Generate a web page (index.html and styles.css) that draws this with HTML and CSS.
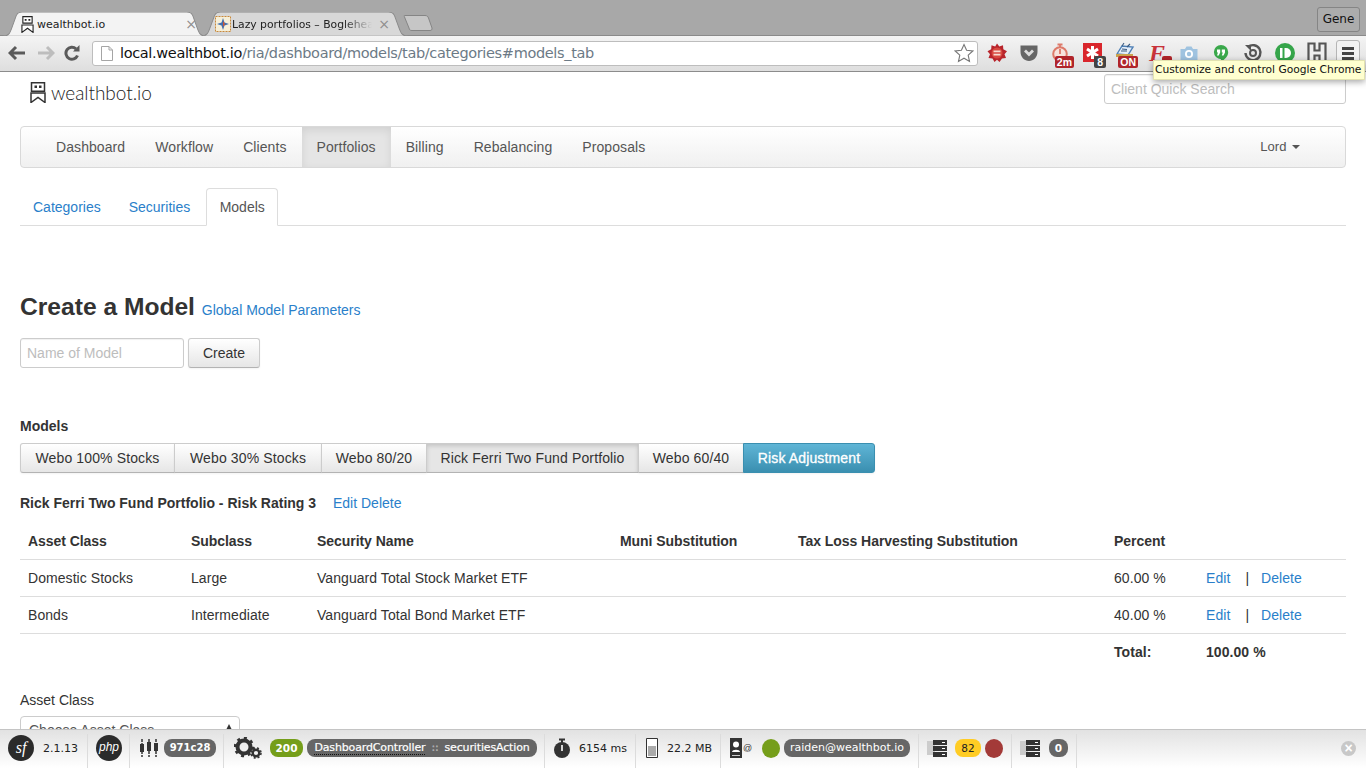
FILE: index.html
```html
<!DOCTYPE html>
<html lang="en">
<head>
    <meta charset="UTF-8">
    <meta name="viewport" content="width=device-width, initial-scale=1.0">
    <title>wealthbot.io</title>
    <link rel="stylesheet" href="styles.css">
</head>
<body>
    <!-- browser frame -->
    <div class="browser">
        <div class="tabstrip">
            <div class="tab tab-active">
                <svg class="tab-shape" viewBox="0 0 200 32" preserveAspectRatio="none"><path d="M0 32C6 32 7 28 9 20L13 5C14 1 16 0 19 0H181C184 0 186 1 187 5L191 20C193 28 194 32 200 32Z" fill="#f3f3f3" stroke="#8a8a8a"/></svg>
                <svg class="tab-icon" viewBox="0 0 14 18" width="13" height="17"><path d="M2 .5H12V7.500H2ZM1 9.500H13V17.500L7 13 1 17.500Z" fill="#fff" stroke="#222" stroke-width="1.200"/><path d="M4 3h2v2H4zM8 3h2v2H8z" fill="#222"/></svg>
                <span class="tab-title">wealthbot.io</span>
                <span class="tab-close">×</span>
            </div>
            <div class="tab tab-back">
                <svg class="tab-shape" viewBox="0 0 200 32" preserveAspectRatio="none"><path d="M0 32C6 32 7 28 9 20L13 5C14 1 16 0 19 0H181C184 0 186 1 187 5L191 20C193 28 194 32 200 32Z" fill="#d8d8d8" stroke="#8a8a8a"/></svg>
                <svg class="tab-icon" viewBox="0 0 16 16" width="16" height="16"><rect x=".5" y=".5" width="15" height="15" fill="#f6efd8" stroke="#c8893a" stroke-dasharray="2 1"/><path d="M8 2 9.500 6.500 14 8 9.500 9.500 8 14 6.500 9.500 2 8 6.500 6.500Z" fill="#3f6fb0"/><path d="M8 5 10 8 8 11Z" fill="#d2562f"/></svg>
                <span class="tab-title tab-fade">Lazy portfolios – Bogleheads</span>
                <span class="tab-close">×</span>
            </div>
            <svg class="newtab" viewBox="0 0 30 16" width="30" height="16"><path d="M1.500.5H22C24 .5 25 1.500 25.500 3L29 13C29.300 14.500 28.500 15.500 27 15.500H9C7 15.500 6.500 15 6 13L1.500 2C1.200 1 1 .5 1.500 .5Z" fill="#c6c6c6" stroke="#858585"/></svg>
            <div class="profile">Gene</div>
        </div>
        <div class="toolbar">
            <svg class="nav-icon nav-back" viewBox="0 0 18 16" width="18" height="16"><path d="M8 2 2 8l6 6M2 8h15" fill="none" stroke="#5a5a5a" stroke-width="3"/></svg>
            <svg class="nav-icon nav-forward" viewBox="0 0 18 16" width="18" height="16"><path d="M10 2l6 6-6 6M16 8H1" fill="none" stroke="#bdbdbd" stroke-width="3"/></svg>
            <svg class="nav-icon nav-reload" viewBox="0 0 16 16" width="16" height="16"><path d="M13.500 10.500A6 6 0 1 1 12 3.800" fill="none" stroke="#5a5a5a" stroke-width="3"/><path d="M9 6.500h6.500V0Z" fill="#5a5a5a"/></svg>
            <div class="omnibox">
                <svg class="page-icon" viewBox="0 0 12 15" width="12" height="15"><path d="M.5.500H8L11.500 4V14.500H.5ZM8 .5V4H11.500" fill="#fff" stroke="#a5a5a5"/></svg>
                <span class="url"><b class="url-host">local.wealthbot.io</b>/ria/dashboard/models/tab/categories#models_tab</span>
                <svg class="star" viewBox="0 0 20 20" width="20" height="20"><path d="M10 1.500 12.600 7.300 18.800 8 14.200 12.200 15.500 18.400 10 15.200 4.500 18.400 5.800 12.200 1.200 8 7.400 7.300Z" fill="#fff" stroke="#777" stroke-width="1.100"/></svg>
            </div>
            <div class="extensions">
                <svg class="ext" viewBox="0 0 22 22" width="22" height="22"><path d="M11 1.500l2.300 3 3.700-1.300.3 4 3.700 2-2.500 3 1.500 3.800-4 .4L13.500 20 11 17.700 8.500 20l-2-3.600-4-.4L4 12.200l-2.500-3 3.700-2 .3-4 3.700 1.300Z" fill="#b8242b"/><circle cx="11" cy="11" r="5.500" fill="#d8483f"/><path d="M7.500 8.500h7v1.800h-7zM7.500 11.800h7v1.800h-7z" fill="#f7dcd2"/></svg>
                <svg class="ext" viewBox="0 0 22 22" width="22" height="22"><path d="M2.500 3.500H19.500V10C19.500 15 15.500 19 11 19S2.500 15 2.500 10Z" fill="#666"/><path d="M7 8.500l4 4 4-4" fill="none" stroke="#ddd" stroke-width="2.800"/></svg>
                <div class="ext ext-badged">
                    <svg viewBox="0 0 22 22" width="22" height="22"><circle cx="10" cy="12" r="6.800" fill="#f7e3dd" stroke="#dd7a6a" stroke-width="2"/><path d="M7.500 2.500h5M10 12V7M10 3v2" stroke="#dd7a6a" stroke-width="1.800"/></svg>
                    <span class="ext-badge badge-red">2m</span>
                </div>
                <div class="ext ext-badged">
                    <svg viewBox="0 0 22 22" width="22" height="22"><rect x="1" y="1" width="19" height="19" fill="#d9262c"/><path d="M10.500 4v13M5 7l11 7M16 7 5 14" stroke="#fff" stroke-width="3"/></svg>
                    <span class="ext-badge badge-dark">8</span>
                </div>
                <div class="ext ext-badged">
                    <svg viewBox="0 0 22 22" width="22" height="22"><path d="M3 12 8 4l11 1-5 8Z" fill="#e4eefa" stroke="#4d7fb5" stroke-width="1.400"/><path d="M8 4 10 1M13 5l3-3M7 9h6M8 7l5 .5" fill="none" stroke="#3a5a80" stroke-width="1.100"/><path d="M2 12h17v3H2z" fill="#c9a24d"/></svg>
                    <span class="ext-badge badge-red">ON</span>
                </div>
                <div class="ext ext-badged">
                    <span class="ext-f">F</span>
                    <span class="ext-badge badge-red badge-f">&nbsp;</span>
                </div>
                <svg class="ext" viewBox="0 0 22 22" width="22" height="22"><path d="M2.500 7H7L8.500 4.500H13.500L15 7H19.500V18H2.500Z" fill="#9fc3e0"/><circle cx="11" cy="12" r="4" fill="#fff"/><circle cx="11" cy="12" r="2.200" fill="#9fc3e0"/></svg>
                <svg class="ext" viewBox="0 0 22 22" width="22" height="22"><path d="M11 3a7.200 7.200 0 0 1 7.200 7.200c0 4.300-3.600 7-7.200 9.800v-2.800a7 7 0 0 1 0-14.200Z" fill="#3aa84b"/><path d="M7 7.500h3.200v3l-1.500 3H7l1-3H7ZM11.800 7.500H15v3l-1.500 3h-1.700l1-3h-1Z" fill="#fff"/></svg>
                <svg class="ext" viewBox="0 0 22 22" width="22" height="22"><path d="M6 5a7.500 7.500 0 1 1-2.500 6" fill="none" stroke="#555" stroke-width="2.400"/><path d="M3 3h6v6Z" fill="#555"/><circle cx="11" cy="11" r="3" fill="none" stroke="#555" stroke-width="2"/></svg>
                <svg class="ext" viewBox="0 0 22 22" width="22" height="22"><circle cx="11" cy="11" r="10" fill="#35a54a"/><path d="M6 6h2.500v10H6Z" fill="#fff"/><path d="M10.500 6H12a5 5 0 0 1 0 10h-1.500Z" fill="#fff"/></svg>
                <svg class="ext" viewBox="0 0 22 22" width="22" height="22"><path d="M2.500 1.500h6v7h5v-7h6v19h-6v-7h-5v7h-6Z" fill="#eee" stroke="#555" stroke-width="2.200"/></svg>
            </div>
            <div class="menu-btn"><span></span><span></span><span></span></div>
        </div>
    </div>
    <div class="chrome-tip">Customize and control Google Chrome</div>

    <div class="page">
        <div class="header">
            <div class="logo">
                <svg viewBox="0 0 16 21" width="16" height="21"><path d="M1.500.7H14.500V9.300H1.500ZM1 11H15V20.500L8 15.500 1 20.500Z" fill="#fff" stroke="#333" stroke-width="1.500"/><path d="M4.500 3.500h2.500v2.500H4.500zM9 3.500h2.500v2.500H9z" fill="#333"/></svg>
                <span class="logo-text">wealthbot.io</span>
            </div>
            <input class="quick-search" type="text" placeholder="Client Quick Search">
        </div>

        <div class="navbar">
            <a class="nav-item">Dashboard</a>
            <a class="nav-item">Workflow</a>
            <a class="nav-item">Clients</a>
            <a class="nav-item active">Portfolios</a>
            <a class="nav-item">Billing</a>
            <a class="nav-item">Rebalancing</a>
            <a class="nav-item">Proposals</a>
            <a class="nav-item nav-user">Lord <i class="caret"></i></a>
        </div>

        <div class="tabs">
            <a class="tab-link">Categories</a>
            <a class="tab-link">Securities</a>
            <a class="tab-link active">Models</a>
        </div>

        <h2 class="title">Create a Model <a class="title-link">Global Model Parameters</a></h2>

        <div class="create-row">
            <input class="model-input" type="text" placeholder="Name of Model">
            <button class="btn">Create</button>
        </div>

        <div class="models-label">Models</div>
        <div class="btn-group">
            <button class="btn">Webo 100% Stocks</button>
            <button class="btn">Webo 30% Stocks</button>
            <button class="btn">Webo 80/20</button>
            <button class="btn active">Rick Ferri Two Fund Portfolio</button>
            <button class="btn">Webo 60/40</button>
            <button class="btn btn-info">Risk Adjustment</button>
        </div>

        <div class="model-head">
            <b>Rick Ferri Two Fund Portfolio - Risk Rating 3</b>
            <span class="model-links"><a>Edit</a> <a>Delete</a></span>
        </div>

        <table class="model-table">
            <colgroup>
                <col class="c-asset"><col class="c-sub"><col class="c-sec"><col class="c-muni"><col class="c-tax"><col class="c-pct"><col>
            </colgroup>
            <thead>
                <tr>
                    <th>Asset Class</th><th>Subclass</th><th>Security Name</th><th>Muni Substitution</th><th>Tax Loss Harvesting Substitution</th><th>Percent</th><th></th>
                </tr>
            </thead>
            <tbody>
                <tr>
                    <td>Domestic Stocks</td><td>Large</td><td>Vanguard Total Stock Market ETF</td><td></td><td></td><td>60.00 %</td>
                    <td><a>Edit</a><span class="pipe">|</span><a>Delete</a></td>
                </tr>
                <tr>
                    <td>Bonds</td><td>Intermediate</td><td>Vanguard Total Bond Market ETF</td><td></td><td></td><td>40.00 %</td>
                    <td><a>Edit</a><span class="pipe">|</span><a>Delete</a></td>
                </tr>
                <tr class="total">
                    <td></td><td></td><td></td><td></td><td></td><td>Total:</td><td>100.00 %</td>
                </tr>
            </tbody>
        </table>

        <label class="field-label">Asset Class</label>
        <div class="fake-select">Choose Asset Class <i class="select-arrow"></i></div>
    </div>

    <!-- symfony profiler bar -->
    <div class="sf-toolbar">
        <div class="sf-block b-version">
            <span class="sf-logo">sf</span>
            <span class="sf-text">2.1.13</span>
        </div>
        <div class="sf-block b-php"><span class="php-logo">php</span></div>
        <div class="sf-block b-token">
            <svg viewBox="0 0 20 20" width="20" height="20"><path d="M3 1v18M10 1v18M17 1v18" stroke="#333" stroke-width="1.500" stroke-dasharray="3 1 11 1"/><path d="M1 6h4v8H1zM8 4h4v9H8zM15 5h4v8h-4z" fill="#333"/></svg>
            <span class="pill pill-token">971c28</span>
        </div>
        <div class="sf-block b-request">
            <svg viewBox="0 0 28 22" width="28" height="22"><circle cx="10" cy="10" r="6.500" fill="none" stroke="#333" stroke-width="4"/><circle cx="10" cy="10" r="9" fill="none" stroke="#333" stroke-width="2.500" stroke-dasharray="3 4"/><circle cx="22" cy="16" r="3.300" fill="none" stroke="#333" stroke-width="2.400"/><circle cx="22" cy="16" r="5" fill="none" stroke="#333" stroke-width="1.500" stroke-dasharray="2 2"/></svg>
            <span class="pill pill-green">200</span>
            <span class="pill pill-wide"><span class="dotted">DashboardController</span><span class="sep">::</span>securitiesAction</span>
        </div>
        <div class="sf-block b-time">
            <svg viewBox="0 0 16 20" width="16" height="20"><circle cx="8" cy="12" r="8" fill="#333"/><path d="M5 .5h6v2H5zM7 2h2v3H7z" fill="#333"/><path d="M7.200 7h1.600v6H7.200z" fill="#fff"/></svg>
            <span class="sf-text">6154 ms</span>
        </div>
        <div class="sf-block b-memory">
            <svg viewBox="0 0 12 20" width="12" height="20"><path d="M.5.500h11v19H.5z" fill="#fff" stroke="#333"/><path d="M2 8h8v10H2z" fill="#aaa"/></svg>
            <span class="sf-text">22.2 MB</span>
        </div>
        <div class="sf-block b-user">
            <svg viewBox="0 0 22 20" width="22" height="20"><path d="M0 0h12v20H0z" fill="#333"/><circle cx="6" cy="6.500" r="3" fill="#fff"/><path d="M2 14c0-3 8-3 8 0z" fill="#fff"/><path d="M2 17h8v1H2z" fill="#ccc"/></svg>
            <span class="at">@</span>
            <span class="blob blob-green"></span>
            <span class="pill pill-user">raiden@wealthbot.io</span>
        </div>
        <div class="sf-block b-db">
            <svg viewBox="0 0 20 20" width="20" height="20"><path d="M0 3h8v14H0z" fill="#ccc"/><path d="M6 2h14v5H6zM6 8h14v5H6zM6 14h14v5H6z" fill="#333"/><path d="M15 4h3v1h-3zM15 10h3v1h-3zM15 16h3v1h-3z" fill="#fff"/></svg>
            <span class="pill pill-yellow">82</span>
            <span class="blob blob-red"></span>
        </div>
        <div class="sf-block b-cache">
            <svg viewBox="0 0 20 20" width="20" height="20"><path d="M0 3h8v14H0z" fill="#ccc"/><path d="M6 2h14v5H6zM6 8h14v5H6zM6 14h14v5H6z" fill="#333"/><path d="M15 4h3v1h-3zM15 10h3v1h-3zM15 16h3v1h-3z" fill="#fff"/></svg>
            <span class="pill pill-zero">0</span>
        </div>
        <span class="sf-close">×</span>
    </div>
</body>
</html>
```

FILE: styles.css
```css
* {
    box-sizing: border-box;
}
body {
    margin: 0;
    height: 768px;
    overflow: hidden;
    background: #fff;
    color: #333;
    font-family: "Liberation Sans", Arial, sans-serif;
    font-size: 14px;
}
a {
    color: #2a7fca;
}

/* browser frame */
.browser {
    height: 72px;
}
.tabstrip {
    height: 36px;
    background: #a8a8a8;
    display: flex;
    align-items: flex-end;
    padding-left: 3px;
    border-bottom: 1px solid #8a8a8a;
    position: relative;
}
.tab {
    position: relative;
    height: 24px;
    display: flex;
    align-items: center;
    margin-right: -5px;
    font-family: "DejaVu Sans", sans-serif;
    font-size: 11px;
    color: #222;
    top: 1px;
}
.tab-shape {
    position: absolute;
    left: 0;
    top: 0;
    width: 100%;
    height: 100%;
}
.tab-active {
    z-index: 2;
    width: 203px;
    padding: 0 9px 0 18px;
}
.tab-back {
    width: 207px;
    padding: 0 18px 0 14px;
    font-size: 10.800px;
}
.tab-icon {
    position: relative;
    flex: none;
    margin-right: 1px;
}
.tab-active .tab-icon {
    margin-right: 3px;
}
.tab-title {
    position: relative;
    flex: 1;
    white-space: nowrap;
    overflow: hidden;
}
.tab-fade {
    -webkit-mask-image: linear-gradient(to right, #000 80%, transparent 100%);
    mask-image: linear-gradient(to right, #000 80%, transparent 100%);
}
.tab-close {
    position: relative;
    color: #8e8e8e;
    font-size: 14px;
    margin-left: 6px;
}
.newtab {
    margin-left: 0;
    margin-bottom: 4px;
    flex: none;
}
.profile {
    position: absolute;
    right: 6px;
    top: 7px;
    width: 43px;
    height: 25px;
    border: 1px solid #858585;
    border-radius: 3px;
    background: #acacac;
    color: #111;
    font-family: "DejaVu Sans", sans-serif;
    font-size: 12px;
    line-height: 23px;
    text-align: center;
}
.toolbar {
    height: 36px;
    display: flex;
    align-items: center;
    padding: 0 6px 1px 8px;
    background: linear-gradient(#f4f4f4, #dedede);
    border-bottom: 1px solid #8c8c8c;
}
.nav-icon {
    flex: none;
}
.nav-back {
    margin-right: 11px;
}
.nav-forward {
    margin-right: 9px;
}
.nav-reload {
    margin-right: 12px;
}
.omnibox {
    width: 886px;
    height: 25px;
    flex: none;
    display: flex;
    align-items: center;
    padding: 0 3px 0 8px;
    background: #fff;
    border: 1px solid #bdbdbd;
    border-radius: 3px;
}
.page-icon {
    flex: none;
}
.url {
    flex: 1;
    margin-left: 7px;
    font-family: "DejaVu Sans", sans-serif;
    font-size: 14.500px;
    line-height: 24px;
    color: #6c7a86;
    white-space: nowrap;
    letter-spacing: -.35px;
}
.url-host {
    font-weight: normal;
    color: #111;
}
.extensions {
    display: flex;
    align-items: center;
    flex: 1;
    padding-left: 8px;
    gap: 10px;
}
.ext {
    width: 22px;
    height: 22px;
    flex: none;
    position: relative;
}
.ext-badged svg {
    display: block;
}
.ext-badge {
    position: absolute;
    right: -2px;
    bottom: -4px;
    padding: 0 2px;
    height: 12px;
    border-radius: 2px;
    font-size: 10.500px;
    font-weight: bold;
    line-height: 12px;
    color: #fff;
}
.badge-red {
    background: #b0242a;
}
.badge-dark {
    background: #444;
    padding: 0 3px;
}
.badge-f {
    width: 10px;
    right: -4px;
}
.ext-f {
    display: block;
    color: #c8323a;
    font-family: "Liberation Serif", serif;
    font-style: italic;
    font-weight: bold;
    font-size: 24px;
    line-height: 22px;
    text-align: center;
}
.menu-btn {
    width: 24px;
    height: 26px;
    flex: none;
    border: 1px solid #b5b5b5;
    border-radius: 3px;
    background: #f2f2f2;
    display: flex;
    flex-direction: column;
    justify-content: center;
    gap: 2px;
    padding: 0 5px;
}
.menu-btn span {
    height: 3px;
    background: #444;
}
.chrome-tip {
    position: absolute;
    left: 1153px;
    top: 60px;
    width: 212px;
    height: 20px;
    background: #ffffcf;
    border: 1px solid #e2e2b0;
    box-shadow: 0 2px 6px rgba(0,0,0,0.35);
    font-family: "DejaVu Sans", sans-serif;
    font-size: 10.700px;
    line-height: 18px;
    padding-left: 1px;
    white-space: nowrap;
    color: #111;
    z-index: 5;
}

/* page */
.page {
    padding: 0 20px;
}
.header {
    height: 54px;
    display: flex;
    justify-content: space-between;
    align-items: flex-start;
}
.logo {
    display: flex;
    align-items: center;
    margin: 9px 0 0 10px;
    gap: 5px;
}
.logo-text {
    font-family: Lato, sans-serif;
    font-weight: 300;
    font-size: 19px;
    letter-spacing: -.05px;
    color: #222;
}
.quick-search {
    width: 242px;
    height: 30px;
    margin-top: 2px;
}
input {
    border: 1px solid #ccc;
    border-radius: 3px;
    padding: 0 6px;
    font: 14px "Liberation Sans", Arial, sans-serif;
    box-shadow: inset 0 1px 1px rgba(0,0,0,0.06);
}
input::placeholder {
    color: #bdbdbd;
}
.navbar {
    height: 42px;
    display: flex;
    padding-left: 20px;
    border: 1px solid #d9d9d9;
    border-radius: 4px;
    background: linear-gradient(#fff, #f0f0f0);
}
.nav-item {
    padding: 0 15px;
    line-height: 40px;
    color: #555;
    letter-spacing: .08px;
}
.nav-item.active {
    background: #e5e5e5;
    box-shadow: inset 0 3px 8px rgba(0,0,0,0.09);
}
.nav-user {
    margin-left: auto;
    font-size: 13px;
    letter-spacing: 0;
    padding-right: 45px;
}
.caret {
    display: inline-block;
    margin-left: 2px;
    vertical-align: 2px;
    border-top: 4px solid #555;
    border-left: 4px solid transparent;
    border-right: 4px solid transparent;
}
.tabs {
    margin-top: 20px;
    height: 38px;
    display: flex;
    gap: 2px;
    border-bottom: 1px solid #ddd;
}
.tab-link {
    height: 38px;
    padding: 0 13px;
    line-height: 38px;
    border-radius: 4px 4px 0 0;
}
.tab-link.active {
    color: #555;
    background: #fff;
    padding: 0 12.500px;
    margin-left: 1px;
    line-height: 36px;
    border: 1px solid #ddd;
    border-bottom-color: #fff;
}
.title {
    margin: 64px 0 0;
    height: 33px;
    line-height: 33px;
    font-size: 24.600px;
    font-weight: bold;
    color: #333;
}
.title-link {
    font-size: 14px;
    font-weight: normal;
}
.create-row {
    display: flex;
    gap: 4px;
    margin-top: 15px;
}
.model-input {
    width: 164px;
    height: 30px;
}
.btn {
    height: 30px;
    padding: 0 14px;
    border: 1px solid #ccc;
    border-bottom-color: #b3b3b3;
    border-radius: 3px;
    background: linear-gradient(#fff, #e6e6e6);
    box-shadow: 0 1px 2px rgba(0,0,0,0.05);
    font: 14px "Liberation Sans", Arial, sans-serif;
    color: #333;
}
.models-label {
    margin-top: 50px;
    font-weight: bold;
    line-height: 16px;
}
.btn-group {
    display: grid;
    grid-template-columns: 155px 147px 105px 212px 105px 131px;
    margin-top: 9px;
}
.btn-group .btn {
    border-radius: 0;
    padding: 0;
    width: calc(100% + 1px);
    margin-left: -1px;
    letter-spacing: .13px;
}
.btn-group .btn:first-child {
    width: 100%;
    margin-left: 0;
    border-radius: 3px 0 0 3px;
}
.btn-group .btn:last-child {
    border-radius: 0 3px 3px 0;
}
.btn.active {
    background: #e6e6e6;
    box-shadow: inset 0 2px 4px rgba(0,0,0,0.15);
}
.btn.btn-info {
    background: linear-gradient(#5fb5d6, #3a8fb0);
    border-color: #3a8fb0;
    color: #fff;
    -webkit-text-stroke: .3px #fff;
}
.model-head {
    margin-top: 21px;
    line-height: 18px;
}
.model-links {
    margin-left: 13px;
}
.model-table {
    width: 100%;
    table-layout: fixed;
    border-collapse: collapse;
    margin-top: 10px;
}
.c-asset { width: 163px; }
.c-sub { width: 126px; }
.c-sec { width: 303px; }
.c-muni { width: 178px; }
.c-tax { width: 316px; }
.c-pct { width: 92px; }
.model-table th,
.model-table td {
    height: 37px;
    padding: 0 8px;
    text-align: left;
    white-space: nowrap;
    border-bottom: 1px solid #ddd;
}
.model-table th {
    padding-top: 2px;
    letter-spacing: -.05px;
}
.model-table td {
    letter-spacing: .06px;
}
.model-table .total td {
    border-bottom: none;
    font-weight: bold;
}
.pipe {
    margin: 0 12px 0 15px;
}
.field-label {
    display: block;
    margin-top: 20px;
    line-height: 20px;
}
.fake-select {
    position: relative;
    width: 220px;
    height: 30px;
    margin-top: 6px;
    padding: 0 8px;
    line-height: 26px;
    border: 1px solid #ccc;
    border-radius: 4px;
    color: #555;
}
.select-arrow {
    position: absolute;
    right: 7px;
    top: 7px;
    border-bottom: 6px solid #333;
    border-left: 3px solid transparent;
    border-right: 3px solid transparent;
}

/* profiler bar */
.sf-toolbar {
    position: fixed;
    left: 0;
    right: 0;
    bottom: 0;
    height: 39px;
    display: flex;
    background: linear-gradient(#e2e2e2, #fff);
    border-top: 1px solid #c4c4c4;
    z-index: 10;
}
.sf-block {
    display: flex;
    align-items: center;
    flex: none;
    border-right: 1px solid #dcdcdc;
    margin-top: 4px;
    padding-bottom: 6px;
    height: 34px;
}
.b-version { width: 88px; padding-left: 8px; gap: 9px; }
.b-php { width: 42px; padding-left: 8px; }
.b-token { width: 94px; padding-left: 9px; gap: 5px; }
.b-request { width: 321px; padding-left: 10px; gap: 4px; }
.b-request svg { margin-right: 4px; }
.b-time { width: 91px; padding-left: 9px; gap: 9px; }
.b-memory { width: 85px; padding-left: 10px; gap: 9px; }
.b-user { width: 198px; padding-left: 9px; }
.b-db { width: 93px; padding-left: 8px; gap: 8px; }
.b-cache { width: 65px; padding-left: 8px; gap: 9px; }
.sf-logo {
    width: 26px;
    height: 26px;
    flex: none;
    border-radius: 50%;
    background: #2b2b2b;
    color: #fff;
    font-family: "Liberation Serif", serif;
    font-style: italic;
    font-size: 16px;
    line-height: 25px;
    text-align: center;
}
.php-logo {
    width: 26px;
    height: 26px;
    flex: none;
    border-radius: 50%;
    background: #2b2b2b;
    color: #fff;
    font-style: italic;
    font-size: 12px;
    line-height: 25px;
    text-align: center;
}
.sf-text {
    font-family: "DejaVu Sans", sans-serif;
    font-size: 11px;
    color: #222;
    white-space: nowrap;
}
.pill {
    height: 18px;
    padding: 0;
    border-radius: 8px;
    background: #666;
    color: #fff;
    font-family: "DejaVu Sans", sans-serif;
    font-size: 10.500px;
    font-weight: bold;
    line-height: 18px;
    text-align: center;
    white-space: nowrap;
    flex: none;
}
.pill-token {
    width: 52px;
    font-size: 10px;
}
.pill-green {
    width: 33px;
    background: #759e1a;
}
.pill-wide {
    width: 230px;
    font-weight: normal;
    font-size: 11px;
    -webkit-text-stroke: .2px #fff;
    letter-spacing: -.15px;
}
.dotted {
    border-bottom: 1px dotted #111;
}
.sep {
    color: #999;
    margin: 0 6px;
}
.at {
    margin-left: -9px;
    width: 8px;
    font-size: 9px;
    color: #333;
}
.blob {
    width: 18px;
    height: 19px;
    flex: none;
    border-radius: 50%;
}
.blob-green {
    background: #759e1a;
    margin: 0 4px 0 11px;
}
.blob-red {
    background: #a33a38;
    margin-left: -4px;
}
.pill-user {
    width: 126px;
    font-weight: normal;
    font-size: 11px;
}
.pill-yellow {
    width: 26px;
    background: #ffcc24;
    color: #222;
    font-weight: normal;
}
.pill-zero {
    width: 19px;
}
.sf-close {
    position: absolute;
    right: 10px;
    top: 11px;
    width: 15px;
    height: 15px;
    border-radius: 50%;
    background: #c8c8c8;
    color: #fff;
    font-size: 14px;
    font-weight: bold;
    line-height: 14px;
    text-align: center;
}
```
